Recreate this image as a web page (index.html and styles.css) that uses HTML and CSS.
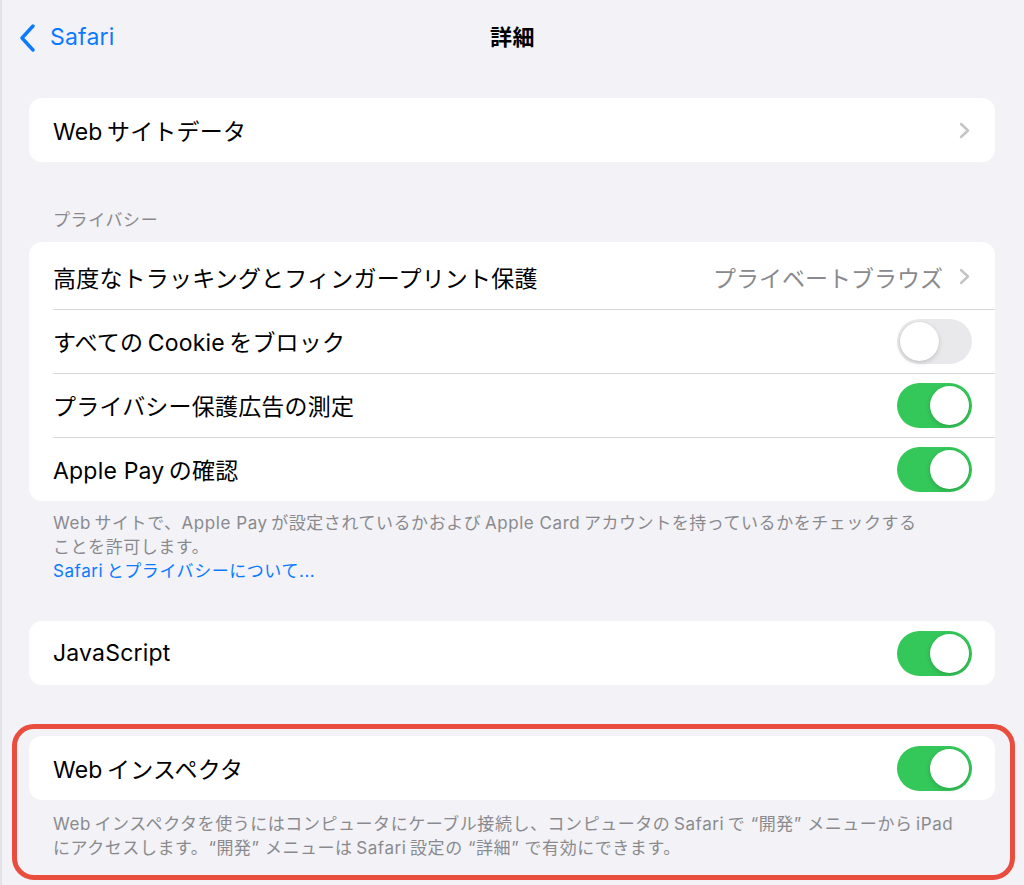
FILE: index.html
```html
<!DOCTYPE html>
<html lang="ja">
<head>
<meta charset="utf-8">
<title>詳細</title>
<link rel="stylesheet" href="styles.css">
</head>
<body>
<div class="screen">
  <header class="nav">
    <div class="back">
      <svg class="back-icon" width="18" height="28" viewBox="0 0 18 28"><path d="M14 2 L3 14 L14 26" fill="none" stroke="#0a7aff" stroke-width="3.4" stroke-linecap="round" stroke-linejoin="round"/></svg>
      <span class="back-label">Safari</span>
    </div>
    <h1 class="title">詳細</h1>
    <div class="nav-spacer"></div>
  </header>

  <section class="group first">
    <div class="card">
      <div class="row">
        <span class="label">Web&#8201;サイトデータ</span>
        <span class="trail">
          <svg class="chev" width="11" height="17" viewBox="0 0 11 17"><path d="M2 2 L9 8.5 L2 15" fill="none" stroke="#c4c4c7" stroke-width="2.4" stroke-linecap="round" stroke-linejoin="round"/></svg>
        </span>
      </div>
    </div>
  </section>

  <section class="group privacy">
    <div class="section-header">プライバシー</div>
    <div class="card">
      <div class="row tall">
        <span class="label">高度なトラッキングとフィンガープリント保護</span>
        <span class="trail">
          <span class="value">プライベートブラウズ</span>
          <svg class="chev" width="11" height="17" viewBox="0 0 11 17"><path d="M2 2 L9 8.5 L2 15" fill="none" stroke="#c4c4c7" stroke-width="2.4" stroke-linecap="round" stroke-linejoin="round"/></svg>
        </span>
      </div>
      <div class="row">
        <span class="label">すべての&#8201;Cookie&#8201;をブロック</span>
        <span class="switch"></span>
      </div>
      <div class="row">
        <span class="label">プライバシー保護広告の測定</span>
        <span class="switch on"></span>
      </div>
      <div class="row">
        <span class="label">Apple Pay&#8201;の確認</span>
        <span class="switch on"></span>
      </div>
    </div>
    <div class="footer">
      Web&#8201;サイトで、Apple Pay&#8201;が設定されているかおよび&#8201;Apple Card&#8201;アカウントを持っているかをチェックする<br>ことを許可します。<br>
      <span class="link">Safari&#8201;とプライバシーについて...</span>
    </div>
  </section>

  <section class="group js">
    <div class="card">
      <div class="row">
        <span class="label">JavaScript</span>
        <span class="switch on"></span>
      </div>
    </div>
  </section>

  <section class="group inspector">
    <div class="card">
      <div class="row">
        <span class="label">Web&#8201;インスペクタ</span>
        <span class="switch on"></span>
      </div>
    </div>
    <div class="footer">
      Web&#8201;インスペクタを使うにはコンピュータにケーブル接続し、コンピュータの&#8201;Safari&#8201;で “開発” メニューから&#8201;iPad<br>にアクセスします。“開発” メニューは&#8201;Safari&#8201;設定の “詳細” で有効にできます。
    </div>
  </section>
</div>
</body>
</html>
```

FILE: styles.css
```css
* {
  box-sizing: border-box;
}

html, body {
  margin: 0;
  padding: 0;
}

body {
  background: #f2f2f7;
  font-family: "Inter", "Noto Sans CJK JP", sans-serif;
  color: #000;
  height: 885px;
  overflow: hidden;
}

.screen {
  border-left: 2px solid #e2e2e7;
  min-height: 885px;
  padding: 0 29px 0 27px;
}

.nav {
  height: 74px;
  display: grid;
  grid-template-columns: 1fr auto 1fr;
  align-items: center;
  margin: 0 -11px 0 -10px;
}

.back {
  display: flex;
  align-items: center;
  gap: 13px;
  color: #0a7aff;
}

.back-icon {
  display: block;
  margin-top: 1px;
}

.back-label {
  font-size: 23px;
  letter-spacing: 0.2px;
}

.title {
  margin: -5px 0 0;
  font-size: 22px;
  font-weight: 600;
  letter-spacing: 0.5px;
}

.group.first {
  margin-top: 24px;
}

.group.privacy {
  margin-top: 47px;
}

.group.js {
  margin-top: 38px;
}

.group.inspector {
  margin-top: 51px;
  position: relative;
}

.group.inspector::after {
  content: "";
  position: absolute;
  top: -12px;
  left: -17px;
  right: -20px;
  bottom: -20px;
  border: 5px solid #e84d3d;
  border-radius: 22px;
  pointer-events: none;
}

.section-header {
  font-size: 17px;
  line-height: 22px;
  color: #8a8a8e;
  padding: 0 24px;
  margin-bottom: 11px;
  letter-spacing: 0.6px;
}

.card {
  background: #fff;
  border-radius: 13px;
  overflow: hidden;
}

.row {
  height: 64px;
  display: flex;
  align-items: center;
  justify-content: space-between;
  padding: 0 23px 0 24px;
  position: relative;
}

.row.tall {
  height: 67px;
  padding-top: 2px;
}

.row + .row::before {
  content: "";
  position: absolute;
  top: 0;
  left: 24px;
  right: 0;
  height: 1px;
  background: #d8d8dc;
}

.label {
  font-size: 23px;
  letter-spacing: 0.2px;
}

.trail {
  display: flex;
  align-items: center;
  gap: 16px;
  padding-right: 2px;
}

.value {
  font-size: 23px;
  color: #8a8a8e;
}

.chev {
  display: block;
}

.switch {
  width: 75px;
  height: 45px;
  border-radius: 23px;
  background: #e9e9eb;
  position: relative;
  flex: none;
}

.switch::after {
  content: "";
  position: absolute;
  top: 3px;
  left: 3px;
  width: 39px;
  height: 39px;
  border-radius: 50%;
  background: #fff;
  box-shadow: 0 2px 5px rgba(0, 0, 0, 0.15), 0 0 0 0.5px rgba(0, 0, 0, 0.06);
}

.switch.on {
  background: #34c759;
}

.switch.on::after {
  left: 33px;
}

.footer {
  font-size: 17px;
  line-height: 24px;
  color: #8a8a8e;
  padding: 10px 24px 0;
  white-space: nowrap;
  letter-spacing: 0.55px;
}

.inspector .footer {
  padding-top: 12px;
}

.link {
  color: #0a7aff;
}
```
